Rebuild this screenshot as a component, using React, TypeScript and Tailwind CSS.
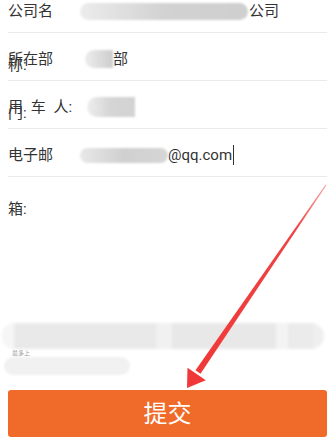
import React from "react";

const FONT = { fontFamily: '"Roboto", "Noto Sans CJK SC", sans-serif' };

type Row = { label: string; spaced?: boolean; value: React.ReactNode };

function Smudge({ className }: { className: string }) {
  return <div className={`shrink-0 blur-[1px] ${className}`} />;
}

const ROWS: Row[] = [
  {
    label: "公司名称:",
    value: (
      <>
        <Smudge className="h-[17px] w-[168px] rounded-full bg-gradient-to-r from-[#ececec] via-[#d2d2d2] to-[#cfcfcf]" />
        <span className="ml-[1px]">公司</span>
      </>
    )
  },
  {
    label: "所在部门:",
    value: (
      <>
        <Smudge className="ml-[5px] h-[18px] w-[28px] rounded-l-full bg-gradient-to-r from-[#ededed] to-[#cdcdcd]" />
        <span>部</span>
      </>
    )
  },
  {
    label: "用 车 人:",
    spaced: true,
    value: <Smudge className="ml-[7px] h-[20px] w-[48px] rounded-l-full bg-gradient-to-r from-[#eeeeee] via-[#d5d5d5] to-[#d3d3d3]" />
  },
  {
    label: "电子邮箱:",
    value: (
      <>
        <Smudge className="h-[15px] w-[88px] rounded-full bg-gradient-to-r from-[#e8e8e8] via-[#d0d0d0] to-[#d6d6d6]" />
        <span>@qq.com</span>
        <span className="ml-[1px] h-[20px] w-[1px] bg-[#333]" />
      </>
    )
  }
];

function FormRow({ row }: { row: Row }) {
  return (
    <div className="ml-2 mr-[5px] flex h-[48px] items-start border-b border-[#ebebeb]">
      <div
        className={`mt-[-1px] w-[60px] shrink-0 text-[15px] leading-[54px] text-[#333] ${
          row.spaced ? "whitespace-nowrap [word-spacing:4px]" : ""
        }`}
      >
        {row.label}
      </div>
      <div className="ml-[12px] flex h-[52px] items-center text-[15px] text-[#333]">{row.value}</div>
    </div>
  );
}

function Arrow() {
  return (
    <svg className="pointer-events-none absolute inset-0" width="332" height="439" viewBox="0 0 332 439">
      <defs>
        <linearGradient id="shaft" x1="326" y1="184" x2="198" y2="372" gradientUnits="userSpaceOnUse">
          <stop offset="0" stopColor="#f4a0a0" />
          <stop offset="0.25" stopColor="#ee4444" />
          <stop offset="1" stopColor="#f03838" />
        </linearGradient>
      </defs>
      <polygon points="325.7,184.5 326.4,185.2 200.5,373.8 195.5,370.2" fill="url(#shaft)" />
      <polygon points="187,388 187.5,367.8 205.8,380.2" fill="#f03838" />
    </svg>
  );
}

export default function App() {
  return (
    <div className="relative h-[439px] w-[332px] overflow-hidden bg-white" style={FONT}>
      <div className="mt-[-15px]">
        {ROWS.map((row) => (
          <FormRow key={row.label} row={row} />
        ))}
      </div>

      <div className="mt-[146px] flex flex-col">
        <div className="ml-[2px] flex h-[26px] w-[322px] overflow-hidden rounded-full bg-[#efefef] blur-[1.5px]">
          <div className="w-[12px] bg-[#f6f6f6]" />
          <div className="w-[142px] bg-[#e9e9e9]" />
          <div className="w-[16px] bg-[#f1f1f1]" />
          <div className="w-[104px] bg-[#e8e8e8]" />
          <div className="w-[12px] bg-[#f3f3f3]" />
          <div className="w-[26px] bg-[#ebebeb]" />
        </div>
        <div className="ml-[12px] mt-[1px] h-[6px] text-[6px] leading-[6px] text-[#9a9a9a]">最多上</div>
        <div className="ml-[4px] mt-[1px] flex h-[18px]">
          <Smudge className="h-[18px] w-[126px] rounded-full bg-[#f1f1f1]" />
        </div>
      </div>

      <button
        type="button"
        className="ml-2 mt-[15px] flex h-[47px] w-[319px] items-center justify-center rounded-[3px] bg-[#f06a29] text-[24px] text-white"
      >
        提交
      </button>

      <Arrow />
    </div>
  );
}
